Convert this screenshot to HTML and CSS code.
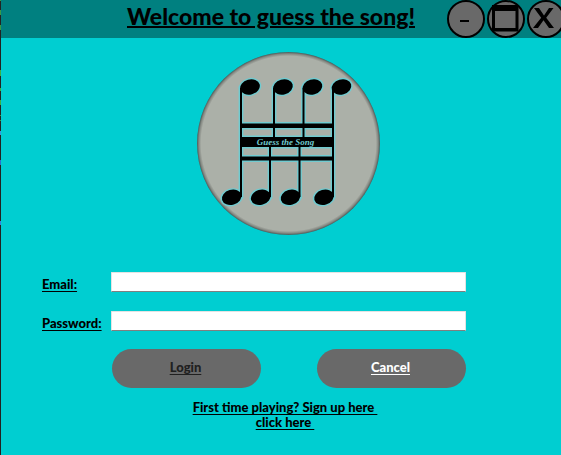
FILE: index.html
```html
<!DOCTYPE html>
<html lang="en">
<head>
<meta charset="utf-8">
<title>Guess the song</title>
<link rel="stylesheet" href="styles.css">
</head>
<body>
<div class="window">
  <header class="titlebar">
    <h1 class="title">Welcome to guess the song!</h1>
    <div class="controls">
      <button class="control" type="button" aria-label="Minimize"><svg viewBox="0 0 38 38"><path d="M13 21h9" stroke="#000" stroke-width="2"/></svg></button>
      <button class="control" type="button" aria-label="Maximize"><svg viewBox="0 0 38 38"><path d="M5 5h26.500v26.500H5zM8 11v17h20.500V11z" fill="#000" fill-rule="evenodd"/></svg></button>
      <button class="control" type="button" aria-label="Close"><svg viewBox="0 0 38 38"><path d="M7 8h5l5 7.500L22 8h4.500l-7.300 9.800L27 28h-5l-5.500-7.800L11 28H6l8.200-10.200z" fill="#000"/></svg></button>
    </div>
  </header>
  <main class="content">
    <svg class="logo" viewBox="197 52 184 184" role="img" aria-label="Guess the Song">
      <defs>
        <radialGradient id="disc">
          <stop offset="0.955" stop-color="#abb0a8"/>
          <stop offset="0.980" stop-color="#858983"/>
          <stop offset="1" stop-color="#4c5957"/>
        </radialGradient>
        <g id="notes">
          <g id="heads">
            <ellipse cx="250" cy="87" rx="10" ry="7.500" transform="rotate(-16 250 87)"/>
            <ellipse cx="283" cy="87" rx="10" ry="7.500" transform="rotate(-16 283 87)"/>
            <ellipse cx="312.500" cy="87" rx="10" ry="7.500" transform="rotate(-16 312.500 87)"/>
            <ellipse cx="341.500" cy="87" rx="10" ry="7.500" transform="rotate(-16 341.500 87)"/>
            <ellipse cx="231.700" cy="197.300" rx="10" ry="7.500" transform="rotate(-16 231.700 197.300)"/>
            <ellipse cx="260.700" cy="197.300" rx="10" ry="7.500" transform="rotate(-16 260.700 197.300)"/>
            <ellipse cx="290.500" cy="197.300" rx="10" ry="7.500" transform="rotate(-16 290.500 197.300)"/>
            <ellipse cx="324" cy="197.300" rx="10" ry="7.500" transform="rotate(-16 324 197.300)"/>
          </g>
          <path d="M240 88h2v109h-2zM273 88h2v52h-2zM302.500 88h2v52h-2zM332 88h2v109h-2zM269 145h2v52h-2zM298.500 145h2v52h-2zM240 123.500h94v4.500h-94zM240 137h94v10h-94zM240 156.500h94v4h-94z"/>
        </g>
      </defs>
      <circle cx="288.500" cy="143.500" r="91.500" fill="url(#disc)"/>
      <use href="#notes" fill="#70cbd0" stroke="#70cbd0" stroke-width="2.800"/>
      <use href="#notes" fill="#000"/>
      <text class="logo-text" x="285.500" y="144.500">Guess the Song</text>
    </svg>
    <form class="login">
      <label for="email">Email:</label>
      <input id="email" type="email">
      <label for="password">Password:</label>
      <input id="password" type="password">
      <div class="actions">
        <button class="action submit" type="submit">Login</button>
        <button class="action" type="reset">Cancel</button>
      </div>
    </form>
    <a class="signup" href="#signup">First time playing? Sign up here&nbsp;<br>click here&nbsp;</a>
  </main>
</div>
</body>
</html>
```
FILE: styles.css
```css
* {
  box-sizing: border-box;
}

body {
  margin: 0;
  overflow: hidden;
  background: #00ced1;
  font: 900 13px/15px Lato, sans-serif;
  color: #000;
}

.window {
  min-height: 100vh;
  padding-left: 1px;
  background:
    linear-gradient(
      #3a9a45 0 1px, #222 1px 10px, #3a9a45 10px 15px, #222 15px 25px,
      #3a9a45 25px 30px, #222 30px 70px, #3cb040 70px 76px, #222 76px 88px,
      #3cb040 88px 91px, #222 91px 100px, #3cb040 100px 105px, #222 105px 115px,
      #3a9a45 115px 116px, #222 116px 120px, #3a9a45 120px 121px, #222 121px 131px,
      #3a96dd 131px 135px, #222 135px 160px, #2a6fd0 160px 165px, #222 165px 221px,
      #3a80dd 221px 225px, #222 225px) left / 1px 100% no-repeat,
    #00ced1;
}

.titlebar {
  display: flex;
  height: 38px;
  background: #008080;
}

.title {
  flex: 1;
  margin: 0;
  padding: 4px 0 0 94px;
  font-size: 23px;
  line-height: 24px;
  font-weight: 900;
  text-align: center;
  white-space: nowrap;
  text-decoration: underline;
  text-decoration-thickness: 2px;
}

.controls {
  display: flex;
  gap: 2px;
  margin-right: -4px;
}

.control {
  width: 38px;
  height: 38px;
  padding: 0;
  border: 2px solid #000;
  border-radius: 50%;
  background: #696969;
}

.control svg {
  display: block;
  width: 38px;
  height: 38px;
  margin: -2px;
}

.content {
  display: flex;
  flex-direction: column;
  padding: 14px 95px 24px 41px;
}

.logo {
  width: 184px;
  height: 184px;
  margin-left: 155px;
}

.logo-text {
  fill: #70cbd0;
  font: italic 700 9px "Liberation Serif", serif;
  text-anchor: middle;
}

.login {
  display: grid;
  grid-template-columns: 59px 1fr;
  gap: 19px 10px;
  margin-top: 36px;
}

.login label {
  padding-top: 5px;
  white-space: nowrap;
}

.login label,
.action,
.signup {
  text-decoration: underline;
  text-decoration-thickness: 1px;
  text-underline-offset: 2px;
}

.login input {
  width: 100%;
  height: 20px;
  padding: 0 4px;
  border: 1px solid #e3e3e3;
  border-bottom-color: #808080;
  border-radius: 1px;
  background: #fff;
}

.actions {
  grid-column: 2;
  display: flex;
  justify-content: space-between;
  margin-top: -1px;
  padding-left: 1px;
}

.action {
  width: 149px;
  height: 39px;
  padding: 0 2px 2px 0;
  border: 0;
  border-radius: 20px;
  background: #696969;
  color: #fff;
  font: inherit;
}

.submit {
  color: #202020;
}

.signup {
  align-self: center;
  margin: 12px 0 0 62px;
  color: #000;
  text-align: center;
}
```
